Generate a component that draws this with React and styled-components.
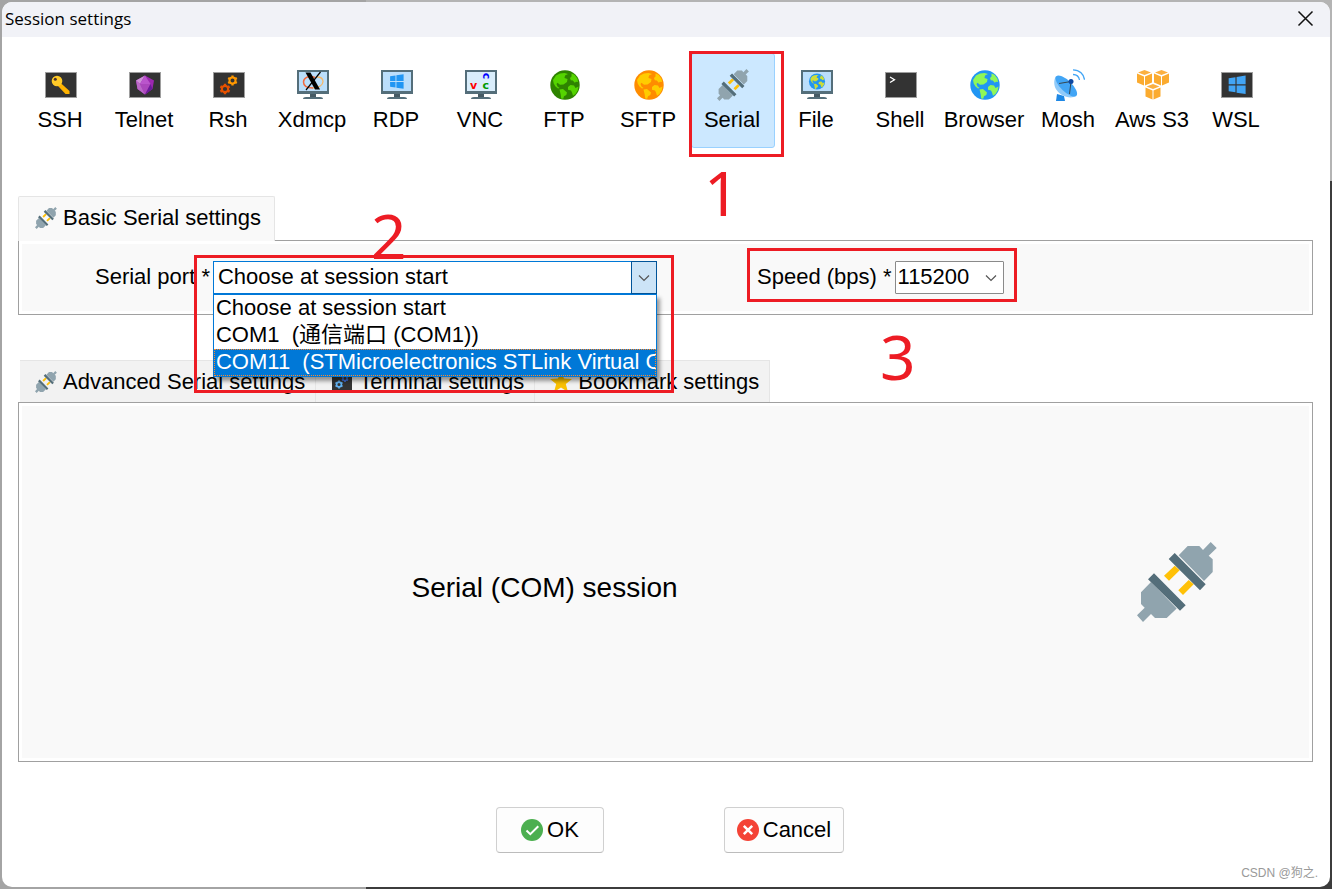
import React, { useState } from "react";
import styled, { createGlobalStyle, css } from "styled-components";

const GlobalStyle = createGlobalStyle`
  * {
    box-sizing: border-box;
  }
  body {
    margin: 0;
    font-family: "Liberation Sans", "Noto Sans CJK SC", Arial, sans-serif;
    font-size: 22px;
    line-height: 26px;
    color: #000;
  }
  button,
  select {
    font: inherit;
    color: inherit;
  }
`;

const Desktop = styled.div`
  display: flex;
  min-height: 100vh;
  padding: 2px;
  background: linear-gradient(to right, #a4a4a4 27.5%, transparent 27.5%),
    linear-gradient(to bottom, #b4b4b4 181px, #3c3c3c 181px);
`;

const Dialog = styled.div`
  position: relative;
  display: flex;
  flex-direction: column;
  flex: 1;
  min-width: 0;
  border-radius: 10px;
  overflow: hidden;
  background: #fff;
`;

const TitleBar = styled.header`
  display: flex;
  justify-content: space-between;
  align-items: center;
  height: 35px;
  padding: 0 16px 2px 3px;
  background: #f1f2f7;

  h1 {
    margin: 0;
    font-family: "Open Sans", "Noto Sans", sans-serif;
    font-size: 17px;
    font-weight: 400;
  }
`;

const CloseButton = styled.button`
  display: flex;
  padding: 0;
  border: none;
  background: none;
`;

const Toolbar = styled.nav`
  display: flex;
  padding: 16px 17px 0;
`;

const ToolButton = styled.button`
  position: relative;
  display: flex;
  flex-direction: column;
  align-items: center;
  gap: 6px;
  flex: 0 1 84px;
  min-width: 0;
  padding: 15px 0 14px;
  border: 1px solid transparent;
  border-radius: 3px;
  background: none;
  white-space: nowrap;

  ${(props) =>
    props.$active &&
    css`
      background: #cce8ff;
      border-color: #99d1ff;
    `}
`;

const ToolLabel = styled.span`
  padding-right: 2px;
`;

const Content = styled.main`
  display: flex;
  flex-direction: column;
  flex: 1;
  padding: 48px 17px 0 16px;
`;

const Tabs = styled.div`
  display: flex;
  padding-left: ${(props) => props.$indent || "0"};
`;

const Tab = styled.button`
  display: flex;
  align-items: center;
  gap: 6px;
  height: 42px;
  padding: 0 10px 0 15px;
  border: solid #e5e5e5;
  border-width: 1px 1px 0 0;
  background: #f2f2f2;
  white-space: nowrap;

  ${(props) =>
    props.$active &&
    css`
      position: relative;
      z-index: 1;
      height: 45px;
      margin-bottom: -1px;
      padding: 0 13px 2px 16px;
      border-width: 1px 1px 0;
      border-radius: 2px 2px 0 0;
      background: #f9f9f9;
    `}
`;

const Panel = styled.section`
  display: flex;
  align-items: center;
  border: 1px solid #a0a0a0;
  background: #f9f9f9;
  box-shadow: inset 0 0 0 3px #fff;
`;

const FieldsPanel = styled(Panel)`
  gap: 100px;
  margin-bottom: 45px;
  padding: 20px 76px;
`;

const SessionPanel = styled(Panel)`
  flex: 1;
  gap: 70px;
  min-height: 200px;
  padding: 0 95px 0 3px;

  h2 {
    flex: 1;
    margin: 0;
    padding-top: 12px;
    font-size: 28px;
    font-weight: 400;
    line-height: 32px;
    text-align: center;
  }
`;

const Field = styled.div`
  position: relative;
  display: flex;
  align-items: center;
  gap: 3px;
  flex: ${(props) => (props.$wide ? "0 1 562px" : "none")};
  min-width: 0;

  label {
    padding-bottom: 2px;
    white-space: nowrap;
  }
`;

const Combo = styled.div`
  position: relative;
  z-index: ${(props) => (props.$open ? 2 : "auto")};
  flex: ${(props) => (props.$open ? "1" : "0 0 109px")};
  min-width: 0;
`;

const Select = styled.select`
  display: block;
  width: 100%;
  height: 33px;
  padding: 0 28px 2px ${(props) => (props.$open ? "4px" : "2px")};
  border: 1px solid ${(props) => (props.$open ? "#0078d7" : "#8a8a8a")};
  border-radius: ${(props) => (props.$open ? "0" : "1px")};
  background: #fff;
  appearance: none;
  outline: none;
`;

const Arrow = styled.span`
  position: absolute;
  top: 0;
  right: 0;
  display: flex;
  align-items: center;
  justify-content: center;
  width: 26px;
  height: 33px;
  pointer-events: none;
  color: #555;

  ${(props) =>
    props.$open &&
    css`
      border: 1px solid #005499;
      background: #cce4f7;
    `}
`;

const Options = styled.ul`
  position: absolute;
  top: 100%;
  left: 0;
  right: 0;
  margin: 0;
  padding: 0;
  list-style: none;
  border: 1px solid #0078d7;
  background: #fff;
  box-shadow: 3px 4px 4px rgba(0, 0, 0, 0.4);
`;

const Option = styled.li`
  height: 27px;
  padding-left: 2px;
  overflow: hidden;
  white-space: pre;

  ${(props) =>
    props.$selected &&
    css`
      background: #0078d7;
      color: #fff;
      outline: 1px dotted #ff8728;
      outline-offset: -1px;
    `}
`;

const Frame = styled.span`
  position: absolute;
  inset: ${(props) => props.$inset};
  z-index: 3;
  border: 3px solid #ed1c24;
  pointer-events: none;
`;

const Step = styled.span`
  position: absolute;
  top: ${(props) => props.$top};
  left: ${(props) => props.$left};
  z-index: 3;
  font-family: "Noto Sans", "Open Sans", sans-serif;
  font-size: 62px;
  line-height: 66px;
  color: #ed1c24;
  pointer-events: none;
`;

const Footer = styled.footer`
  display: flex;
  justify-content: center;
  gap: 120px;
  padding: 45px 0 34px 8px;
`;

const ActionButton = styled.button`
  display: flex;
  align-items: center;
  justify-content: center;
  gap: 4px;
  width: ${(props) => props.$width};
  height: 46px;
  padding: 0;
  border: 1px solid #d0d0d0;
  border-bottom-color: #bcbcbc;
  border-radius: 4px;
  background: #fdfdfd;
`;

const Watermark = styled.span`
  position: absolute;
  right: 12px;
  bottom: 4px;
  font-size: 12px;
  line-height: 20px;
  color: #999;
`;

const Svg = ({ size = 32, box = 32, children }) => (
  <svg width={size} height={size} viewBox={`0 0 ${box} ${box}`} aria-hidden="true">
    {children}
  </svg>
);

const Terminal = ({ children }) => (
  <>
    <rect x="0.5" y="3.5" width="31" height="25" fill="#333" stroke="#9e9e9e" />
    {children}
  </>
);

const Monitor = ({ fill = "#bbdefb", children }) => (
  <>
    <path d="M13 24h6v4h-6z" fill="#455a64" />
    <path d="M6 30q0-2 3-2h14q3 0 3 2z" fill="#546e7a" />
    <rect y="1" width="32" height="24" fill="#546e7a" />
    <rect x="2" y="3" width="28" height="19" fill={fill} />
    {children}
  </>
);

const Gear = ({ x, y, r, color }) => (
  <g transform={`translate(${x} ${y})`} stroke={color} fill="none">
    <circle r={r * 0.6} strokeWidth={r * 0.4} />
    {[0, 60, 120, 180, 240, 300].map((a) => (
      <path key={a} d={`M0 ${-r * 0.7}V${-r}`} strokeWidth={r * 0.45} transform={`rotate(${a})`} />
    ))}
  </g>
);

const Windows = ({ color }) => (
  <path
    d="M9 8.6l6-.9v6.2H9zM16 7.5l8-1.2v7.6h-8zM9 15h6v6.1l-6-.9zM16 15h8v7.6l-8-1.2z"
    fill={color}
  />
);

const Globe = ({ sea, land }) => (
  <>
    <circle cx="16" cy="16" r="14.7" fill={sea} />
    <path
      d="M4 11L7 6.500 11 4.500l4.500-.5 3.500 1-3 1.500L15.500 9l3 1-.5 3-3.500 2.500-3.500.2-2.500-2L7.500 15l1 2.500 2 1.500-1.500.5-2.500-2-1.800-3zM10.500 20.500l3.500-.5 4 3.500-.7 2.500-2.300 1.200-.8 2.500-2-.2-.5-4zM22.500 4.500l3 1.300 3 4 .5 3.200-2-.2-1.200 1-2-2.300-2-.3-.8-2.200 1.500-1.500zM19 18l2.500-2 3.500.5 1.500 2.500 3-1.500-.8 4-2.200 3.500-2.500 1.800-1-3.300-1-2-3-.8z"
      fill={land}
    />
  </>
);

const Plug = ({ size }) => (
  <Svg size={size} box={80}>
    <path
      d="M14 40L4 50.300V62l3.700 3.700L0 73.300 6 80l8-8 4 4h11.700l10-9.500zM41.700 13.300L50.700 4h11.600L66 8l7.700-8 6 6-8 7.700 4 3.600V30L67 39z"
      fill="#90a4ae"
    />
    <path
      d="M37.700 23.700l5 4.600L32 38.700l-5-5zM51.700 38l5 4.300L46 53l-4.700-4.700z"
      fill="#ffc107"
    />
    <path
      d="M17 31.300l31.700 32-5.700 5.400-32-31.400zM37.700 11l31 31.300-5.700 6L31.700 17z"
      fill="#546e7a"
    />
  </Svg>
);

const Cube = ({ x, y }) => (
  <g transform={`translate(${x} ${y})`}>
    <path d="M7.500 0L14 2.500 7.500 5 1 2.500z" fill="#fbb040" />
    <path d="M0 3.600l7 2.800v9.200l-7-3.200zM15 3.600L8 6.400v9.200l7-3.200z" fill="#fbab2f" />
  </g>
);

const sessions = [
  {
    name: "SSH",
    icon: (
      <Terminal>
        <path d="M14 12.500l10.500 9.500v3h-4l-8-8.500z" fill="#ffb300" />
        <circle cx="12" cy="12" r="5.300" fill="#ffca28" />
        <circle cx="10.300" cy="10.300" r="1.500" fill="#4e342e" />
      </Terminal>
    ),
  },
  {
    name: "Telnet",
    icon: (
      <Terminal>
        <path d="M16 6.500l9 5-1.500 8.500-7.500 5.500L8.500 20 7 11.500z" fill="#9c27b0" />
        <path d="M16 6.500l-5 8.500-4-3.500z" fill="#ce93d8" />
        <path d="M16 6.500L21.500 15H11z" fill="#ba55cc" />
        <path d="M11 15h10.500L16 25.500z" fill="#ab47bc" />
        <path d="M11 15l5 10.500L8.500 20 7 11.500z" fill="#ba68c8" />
        <path d="M21.500 15l2 5-7.500 5.500z" fill="#6a1b9a" />
      </Terminal>
    ),
  },
  {
    name: "Rsh",
    icon: (
      <Terminal>
        <Gear x={19.500} y={11.500} r={5} color="#ff9800" />
        <Gear x={12} y={20} r={5.300} color="#e65100" />
      </Terminal>
    ),
  },
  {
    name: "Xdmcp",
    icon: (
      <Monitor>
        <path d="M18 8.500C11 6 6.500 9 6.500 13s4 6 9.500 6" fill="none" stroke="#f4683c" strokeWidth="1.500" />
        <path d="M16 19c6 0 10-3 10-6.500S23 8 20 8" fill="none" stroke="#f5b86a" strokeWidth="1.300" />
        <path d="M23.500 3L9 21" stroke="#000" strokeWidth="1.200" />
        <path d="M8.500 3.500h5l9.500 17h-5z" fill="#000" />
      </Monitor>
    ),
  },
  {
    name: "RDP",
    icon: (
      <Monitor>
        <g transform="translate(1 -.5) scale(.9)">
          <Windows color="#2196f3" />
        </g>
      </Monitor>
    ),
  },
  {
    name: "VNC",
    icon: (
      <Monitor fill="#d9edfb">
        <g fontFamily="DejaVu Sans" fontWeight="700" fontSize="11">
          <text x="5" y="20" fill="#f00">v</text>
          <text x="17.500" y="20" fill="#090">c</text>
          <text transform="translate(18.300 3.700) rotate(90)" fill="#00f">c</text>
        </g>
      </Monitor>
    ),
  },
  { name: "FTP", icon: <Globe sea="#2e8300" land="#55d400" /> },
  { name: "SFTP", icon: <Globe sea="#ff8c00" land="#ffcc00" /> },
  { name: "Serial" },
  {
    name: "File",
    icon: (
      <Monitor>
        <g transform="translate(7.200 3.700) scale(.55)">
          <Globe sea="#2196f3" land="#cddc39" />
        </g>
      </Monitor>
    ),
  },
  {
    name: "Shell",
    icon: (
      <Terminal>
        <path d="M5 8l4.500 2.700L5 13.500" fill="none" stroke="#fff" strokeWidth="1.300" />
      </Terminal>
    ),
  },
  { name: "Browser", icon: <Globe sea="#2196f3" land="#8ff758" /> },
  {
    name: "Mosh",
    icon: (
      <>
        <path d="M4 25l7 2 1 5H3z" fill="#1e88e5" />
        <path d="M3 7C-1 14 2 22 9 26c5 3 11 3 14.500 1z" fill="#90caf9" />
        <ellipse cx="13.300" cy="17" rx="14" ry="5.500" transform="rotate(44 13.300 17)" fill="#42a5f5" />
        <path d="M6 14.500L18 12.500 16.500 25" fill="none" stroke="#37474f" />
        <circle cx="18" cy="12.500" r="2.500" fill="#0d47a1" />
        <path d="M20 5.500c3.500 0 6 2.500 6.500 5.500M20 .8c6.500 0 11 4.500 11.500 10" fill="none" stroke="#42a5f5" strokeWidth="1.300" />
      </>
    ),
  },
  {
    name: "Aws S3",
    icon: (
      <>
        <Cube x={0} y={1} />
        <Cube x={17} y={1} />
        <Cube x={8.500} y={15} />
      </>
    ),
  },
  {
    name: "WSL",
    icon: (
      <Terminal>
        <g transform="translate(-2.500 -.5) scale(1.130)">
          <Windows color="#42a5f5" />
        </g>
      </Terminal>
    ),
  },
];

const ports = [
  "Choose at session start",
  "COM1  (通信端口 (COM1))",
  "COM11  (STMicroelectronics STLink Virtual COM Port (COM11))",
];

const Chevron = () => (
  <svg width="12" height="8" viewBox="0 0 12 8" aria-hidden="true">
    <path d="M1 1.500l5 5 5-5" fill="none" stroke="currentColor" strokeWidth="1.200" />
  </svg>
);

const App = () => {
  const [session, setSession] = useState("Serial");
  const [port, setPort] = useState(ports[0]);

  return (
    <>
      <GlobalStyle />
      <Desktop>
        <Dialog role="dialog" aria-labelledby="dialog-title">
          <TitleBar>
            <h1 id="dialog-title">Session settings</h1>
            <CloseButton aria-label="Close">
              <Svg size={17} box={17}>
                <path d="M1.500 1.500l14 14M15.500 1.500l-14 14" stroke="#111" strokeWidth="1.500" />
              </Svg>
            </CloseButton>
          </TitleBar>

          <Toolbar>
            {sessions.map(({ name, icon }) => (
              <ToolButton key={name} $active={name === session} onClick={() => setSession(name)}>
                {icon ? <Svg>{icon}</Svg> : <Plug size={32} />}
                <ToolLabel>{name}</ToolLabel>
                {name === "Serial" && (
                  <>
                    <Frame $inset="-3px -10px -10px -3px" />
                    <Step $top="105px" $left="12px">1</Step>
                  </>
                )}
              </ToolButton>
            ))}
          </Toolbar>

          <Content>
            <Tabs>
              <Tab $active>
                <Plug size={22} />
                Basic Serial settings
              </Tab>
            </Tabs>
            <FieldsPanel>
              <Field $wide>
                <label htmlFor="port">Serial port *</label>
                <Combo $open>
                  <Select id="port" $open value={port} onChange={(e) => setPort(e.target.value)}>
                    {ports.map((p) => (
                      <option key={p}>{p}</option>
                    ))}
                  </Select>
                  <Arrow $open>
                    <Chevron />
                  </Arrow>
                  <Options role="listbox" aria-label="Serial port">
                    {ports.map((p, i) => (
                      <Option key={p} role="option" aria-selected={i === 2} $selected={i === 2} onClick={() => setPort(p)}>
                        {p}
                      </Option>
                    ))}
                  </Options>
                  <Frame $inset="-6px -17px -99px -19px" />
                  <Step $top="-59px" $left="158px">2</Step>
                </Combo>
              </Field>
              <Field>
                <label htmlFor="speed">Speed (bps) *</label>
                <Combo>
                  <Select id="speed" defaultValue="115200">
                    <option>9600</option>
                    <option>115200</option>
                  </Select>
                  <Arrow>
                    <Chevron />
                  </Arrow>
                </Combo>
                <Frame $inset="-13px -13px -8px -10px" />
                <Step $top="62px" $left="123px">3</Step>
              </Field>
            </FieldsPanel>

            <Tabs $indent="2px">
              <Tab>
                <Plug size={22} />
                Advanced Serial settings
              </Tab>
              <Tab>
                <Svg size={22} box={22}>
                  <rect x="1" y="2" width="20" height="18" fill="#333" />
                  <Gear x={14} y={7.500} r={3.500} color="#3f6fd8" />
                  <Gear x={8} y={13.500} r={4} color="#64b5f6" />
                </Svg>
                Terminal settings
              </Tab>
              <Tab>
                <Svg size={22} box={22}>
                  <path d="M11 0l3 7.500 8 .5-6.200 5 2.200 8-7-4.500L4 21l2.200-8L0 8l8-.5z" fill="#f9c000" />
                </Svg>
                Bookmark settings
              </Tab>
            </Tabs>
            <SessionPanel>
              <h2>Serial (COM) session</h2>
              <Plug size={80} />
            </SessionPanel>
          </Content>

          <Footer>
            <ActionButton $width="108px">
              <Svg size={22} box={22}>
                <circle cx="11" cy="11" r="11" fill="#4caf50" />
                <path d="M5.500 11.500l3.800 3.700 8-8" fill="none" stroke="#fff" strokeWidth="2" />
              </Svg>
              OK
            </ActionButton>
            <ActionButton $width="120px">
              <Svg size={22} box={22}>
                <circle cx="11" cy="11" r="11" fill="#f44336" />
                <path d="M6.800 6.800l8.400 8.400M15.200 6.800l-8.400 8.400" stroke="#fff" strokeWidth="2.500" />
              </Svg>
              Cancel
            </ActionButton>
          </Footer>
          <Watermark>CSDN @狗之.</Watermark>
        </Dialog>
      </Desktop>
    </>
  );
};

export default App;
